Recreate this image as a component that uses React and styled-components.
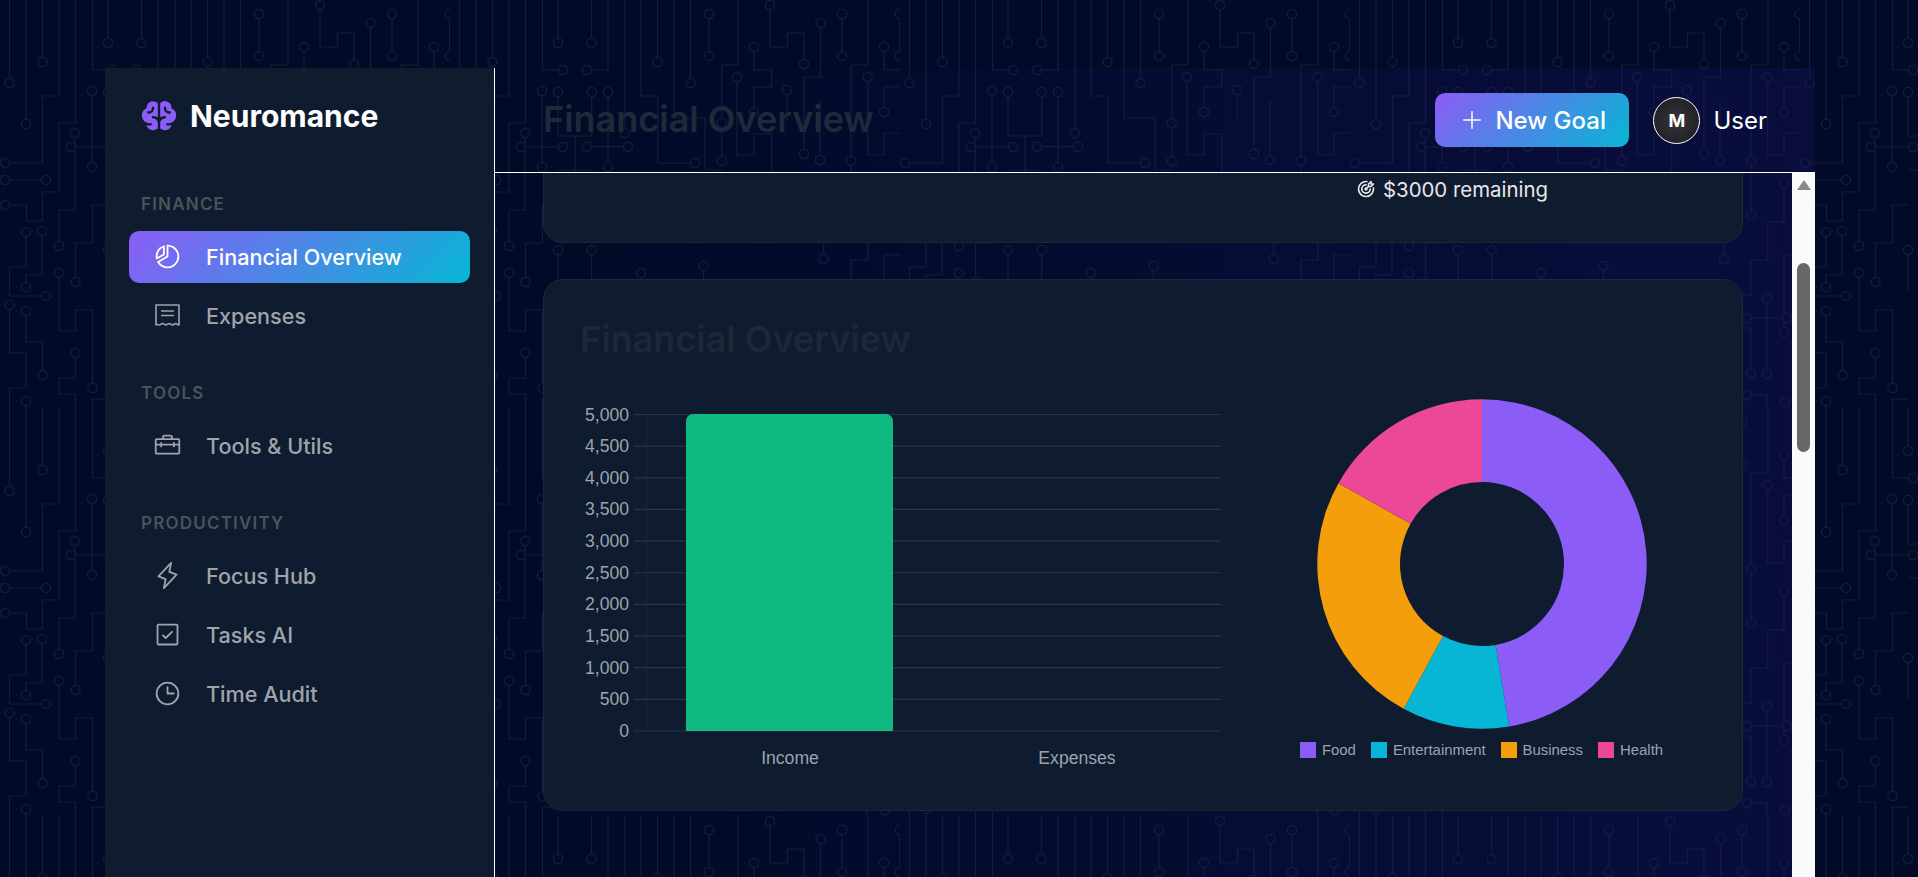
import React from "react";
import styled, { createGlobalStyle } from "styled-components";
import { PiBrainFill, PiChartPieSlice, PiLightning, PiCheckSquare, PiClock, PiPlus, PiToolbox } from "react-icons/pi";
import { TbTargetArrow } from "react-icons/tb";

// circuit board tile behind the page
const traces = [
  "9.5,0 9.5,83", "26,0 26,124", "42.5,0 42.5,62", "59,0 59,96 42.5,96 42.5,163 5,163",
  "75.5,0 75.5,123 59,123 59,192 42.5,192 42.5,221 26.5,221 26.5,205 5,205",
  "92.5,0 92.5,70 113,70", "92,91 92,167", "75,133 75,210 59,210 59,246", "71,147 113,147",
  "5,180 46,180", "108,205 92.5,205 92.5,243 75.5,243 75.5,282",
  "26,232 26,267 9.5,267 9.5,296 46,296", "42,231 42,275 26,275 26,287",
  "59,273 59,331 75.5,331 75.5,310 92.5,310 92.5,388",
  "9.5,305 9.5,353 26,353 26,388 9.5,388 9.5,408", "26,311 26,342 42.5,342 42.5,375",
  "75.5,353 75.5,378 59,378 59,394 75.5,394 75.5,408", "26,401 26,408", "108,399 92.5,399 92.5,408",
  "108,0 108,43", "141.5,0 141.5,43", "158,0 158,70 137,70", "175,0 175,133",
  "191,0 191,96 207.7,96 207.7,163 245,163", "207.5,0 207.5,62", "224,0 224,118 255,118 255,170 272,170",
  "240.5,0 240.5,83", "259,14 259,56", "288,0 288,65 271.7,65 271.7,161",
  "304,47 304,70 321.7,70 321.7,87 304,87 304,112", "287,77 287,155 304,155 304,134 321.7,134 321.7,200",
  "320,5 320,47 337.5,47 337.5,33 354,33 354,64", "337,90 337,122", "370.5,23 370.5,77 354,77 354,154",
  "370,100 370,160", "392,14 392,56", "418,0 418,65 401,65 401,215", "434,47 434,70 450,70",
  "434,112 434,87 450,87", "417.7,77 417.7,155 434,155 434,133 450,133",
  "108,92 108,136 141.7,136 141.7,92", "158,92 158,167", "125,136 125,172", "108,170 142,170",
  "137,146.7 178,146.7", "449.7,14 449.7,56",
  "108,250 108,290", "141.6,250 141.6,290", "191,273 191,300", "253.5,266 253.5,300", "373.7,259 373.7,230",
  "434,183 434,222 417.7,222 417.7,260 401,260 401,295 386,295", "450,255 434,255 434,332",
  "417,298 417,374", "397,318 437,318", "401,373 401,328 386,328", "397,395 417,395 417,408",
];
const pads = [
  [9.5, 83], [26, 124], [42.5, 62], [5, 163], [5, 205], [113, 70], [92, 91], [92, 167], [75, 133], [59, 246],
  [71, 147], [113, 147], [5, 180], [46, 180], [75.5, 282], [26, 232], [46, 296], [42, 231], [26, 287],
  [59, 273], [92.5, 388], [9.5, 305], [26, 311], [42.5, 375], [75.5, 353], [26, 401],
  [108, 43], [141.5, 43], [137, 70], [175, 133], [245, 163], [207.5, 62], [240.5, 83], [259, 14], [259, 56],
  [271.7, 123], [271.7, 161], [304, 47], [304, 112], [287, 77], [320, 5], [354, 64], [337, 90], [370.5, 23],
  [354, 154], [370, 160], [392, 14], [392, 56], [401, 161], [401, 215], [434, 47], [434, 112], [417.7, 77],
  [108, 92], [141.7, 92], [158, 92], [158, 167], [137, 146.7], [178, 146.7], [449.7, 14], [449.7, 56],
  [108, 250], [141.6, 250], [191, 273], [253.5, 266], [373.7, 259], [434, 183], [434, 332], [417, 298], [417, 374],
  [397, 318], [437, 318], [401, 373], [397, 395], [435, 402],
];
const tile = `<svg xmlns="http://www.w3.org/2000/svg" width="450" height="408"><g fill="none" stroke="#141d38" stroke-width="1.2">${traces
  .map((t) => `<polyline points="${t}"/>`)
  .join("")}</g><g fill="#010a26" stroke="#141d38" stroke-width="1.2">${pads
  .map(([x, y]) => `<circle cx="${x}" cy="${y}" r="4.6"/>`)
  .join("")}</g></svg>`;

const GlobalStyle = createGlobalStyle`
  * { box-sizing: border-box; }
  html, body { margin: 0; height: 100%; overflow: hidden; }
  body {
    background-color: #010a26;
    background-image: url("data:image/svg+xml,${encodeURIComponent(tile)}");
    background-size: 450px 408px;
    font-family: Inter, "Liberation Sans", sans-serif;
  }
`;

const Shell = styled.div`
  display: flex;
  height: 100vh;
  padding: 68px 103px 0 105px;
`;

const Sidebar = styled.aside`
  width: 389px;
  flex-shrink: 0;
  background: #0f1b2e;
  padding: 34px 24px 0;
`;

const Logo = styled.div`
  display: flex;
  align-items: center;
  gap: 12px;
  height: 28px;
  margin: 0 0 63.5px 11px;
  color: #fff;
  font-size: 30px;
  font-weight: 700;
  svg { color: #8b5cf6; width: 38px; height: 38px; }
`;

const Section = styled.div`
  margin-bottom: 41px;
`;

const SectionLabel = styled.div`
  height: 20px;
  line-height: 20px;
  margin: 0 0 17px 12px;
  color: #4d525b;
  font-size: 17px;
  font-weight: 600;
  letter-spacing: 1.2px;
`;

const NavList = styled.div`
  display: flex;
  flex-direction: column;
  gap: 7px;
`;

const NavItem = styled.div`
  display: flex;
  align-items: center;
  gap: 24px;
  height: 52px;
  padding: 0 24px;
  border-radius: 10px;
  font-size: 21.6px;
  font-weight: 500;
  color: ${(p) => (p.$active ? "#fff" : "#a0a3ab")};
  background: ${(p) => (p.$active ? "linear-gradient(135deg, #8b5cf6, #06b6d4)" : "transparent")};
`;

const NavIcon = styled.span`
  display: flex;
  justify-content: center;
  width: 29px;
  svg { width: 29px; height: 29px; }
`;

const Content = styled.div`
  flex: 1;
  min-width: 0;
  display: flex;
  flex-direction: column;
  border-left: 1px solid #fff;
  background: linear-gradient(90deg, rgba(20, 15, 90, 0) 0%, rgba(24, 18, 100, 0.36) 100%);
`;

const Header = styled.header`
  display: flex;
  align-items: center;
  height: 105px;
  padding: 0 48px;
  border-bottom: 1px solid #fff;
`;

const PageTitle = styled.h1`
  margin: 0 auto 2px 0;
  color: #1e2a3a;
  font-size: 36px;
  font-weight: 600;
`;

const NewGoal = styled.button`
  display: flex;
  align-items: center;
  gap: 11px;
  width: 194px;
  height: 54px;
  padding: 0 0 0 25px;
  border: none;
  border-radius: 10px;
  color: #fff;
  font: 500 24px Inter, sans-serif;
  background: linear-gradient(135deg, #8b5cf6, #06b6d4);
  svg { width: 24px; height: 24px; }
`;

const Avatar = styled.div`
  display: flex;
  align-items: center;
  justify-content: center;
  width: 47px;
  height: 47px;
  margin-left: 24px;
  border: 1px solid #fff;
  border-radius: 50%;
  background: radial-gradient(circle, #34343a, #1b1b20);
  color: #fff;
  font-size: 18px;
  font-weight: 700;
`;

const UserName = styled.span`
  margin-left: 13px;
  color: #fff;
  font-size: 24px;
`;

const Body = styled.div`
  flex: 1;
  min-height: 0;
  display: flex;
`;

const Cards = styled.main`
  flex: 1;
  min-width: 0;
  display: flex;
  flex-direction: column;
  gap: 36px;
  padding: 0 49px 0 48px;
`;

const GoalStub = styled.section`
  display: flex;
  justify-content: flex-end;
  height: 70px;
  padding: 3px 194px 0 0;
  background: #0f1b2e;
  border: 1px solid #1c2838;
  border-top: none;
  border-radius: 0 0 20px 20px;
`;

const Remaining = styled.div`
  display: flex;
  align-items: center;
  gap: 7px;
  height: 26px;
  color: #e5e7eb;
  font-size: 20.4px;
  svg { width: 20px; height: 20px; }
`;

const Card = styled.section`
  height: 532px;
  padding: 38.5px 37px 0;
  background: #0f1b2e;
  border: 1px solid #1c2838;
  border-radius: 20px;
`;

const CardTitle = styled.h2`
  margin: 0 0 0 -1px;
  color: #1c2838;
  font-size: 36px;
  font-weight: 600;
  line-height: 40px;
`;

const Charts = styled.div`
  display: flex;
  margin-top: 41.5px;
`;

const DonutColumn = styled.div`
  display: flex;
  flex-direction: column;
  align-items: center;
  width: 445px;
  margin: -1px 0 0 38px;
`;

const Legend = styled.div`
  display: flex;
  gap: 15px;
  margin-top: 13px;
`;

const LegendItem = styled.div`
  display: flex;
  align-items: center;
  gap: 6px;
  color: #9ca3af;
  font: 14.9px "Liberation Sans", sans-serif;
`;

const Swatch = styled.i`
  display: block;
  width: 16px;
  height: 16px;
  background: ${(p) => p.$color};
`;

const ScrollTrack = styled.div`
  display: flex;
  flex-direction: column;
  align-items: center;
  width: 23px;
  flex-shrink: 0;
  background: #fafafa;
`;

const ScrollArrow = styled.div`
  width: 0;
  height: 0;
  margin-top: 7px;
  border-left: 7.5px solid transparent;
  border-right: 7.5px solid transparent;
  border-bottom: 10px solid #8a8a8a;
`;

const ScrollThumb = styled.div`
  width: 13px;
  height: 189px;
  margin-top: 73px;
  border-radius: 7px;
  background: #686868;
`;

const ReceiptIcon = () => (
  <svg viewBox="0 0 29 29" fill="none" stroke="currentColor" strokeWidth="1.6" strokeLinejoin="round">
    <path d="M3 4h23v20c-1.3 0-1.9-1.5-3.3-1.5s-1.9 1.5-3.3 1.5-1.9-1.5-3.2-1.5-1.9 1.5-3.3 1.5-1.9-1.5-3.2-1.5S7.800 24 6.300 24 4.300 22.500 3 24z" />
    <path d="M8 10h13M8 14.500h13" />
  </svg>
);

const ticks = [5000, 4500, 4000, 3500, 3000, 2500, 2000, 1500, 1000, 500, 0];

const BarChart = () => (
  <svg width="640" height="372" viewBox="0 0 640 372" fontFamily="Liberation Sans, sans-serif">
    {ticks.map((t, i) => {
      const y = 14.5 + i * 31.65;
      return (
        <g key={t}>
          <line x1="53" x2="640" y1={y} y2={y} stroke="#2a3547" strokeWidth="1.2" />
          <text x="48" y={y + 6} textAnchor="end" fontSize="17.6" fill="#9ca3af">
            {t.toLocaleString("en-US")}
          </text>
        </g>
      );
    })}
    <line x1="65.5" x2="65.5" y1="14" y2="331" stroke="#1a2636" />
    <path d="M105 331V21a7 7 0 0 1 7-7h193a7 7 0 0 1 7 7v310z" fill="#10b981" />
    <text x="209" y="364" textAnchor="middle" fontSize="17.6" fill="#9ca3af">Income</text>
    <text x="496" y="364" textAnchor="middle" fontSize="17.6" fill="#9ca3af">Expenses</text>
  </svg>
);

const slices = [
  { label: "Food", value: 45, color: "#8b5cf6" },
  { label: "Entertainment", value: 10, color: "#06b6d4" },
  { label: "Business", value: 24, color: "#f59e0b" },
  { label: "Health", value: 16, color: "#ec4899" },
];

const arcPoint = (r, a) => [165 + r * Math.sin(a), 165 - r * Math.cos(a)];

const Donut = () => {
  const total = slices.reduce((s, x) => s + x.value, 0);
  let start = 0;
  return (
    <svg width="330" height="330" viewBox="0 0 330 330">
      {slices.map((s) => {
        const end = start + (s.value / total) * Math.PI * 2;
        const large = end - start > Math.PI ? 1 : 0;
        const [a, b] = arcPoint(164.7, start);
        const [c, d] = arcPoint(164.7, end);
        const [e, f] = arcPoint(82, end);
        const [g, h] = arcPoint(82, start);
        start = end;
        return (
          <path
            key={s.label}
            fill={s.color}
            d={`M${a} ${b}A164.7 164.7 0 ${large} 1 ${c} ${d}L${e} ${f}A82 82 0 ${large} 0 ${g} ${h}Z`}
          />
        );
      })}
    </svg>
  );
};

const sections = [
  { title: "FINANCE", items: [["Financial Overview", <PiChartPieSlice />, true], ["Expenses", <ReceiptIcon />]] },
  { title: "TOOLS", items: [["Tools & Utils", <PiToolbox />]] },
  { title: "PRODUCTIVITY", items: [["Focus Hub", <PiLightning />], ["Tasks AI", <PiCheckSquare />], ["Time Audit", <PiClock />]] },
];

export default function App() {
  return (
    <>
      <GlobalStyle />
      <Shell>
        <Sidebar>
          <Logo>
            <PiBrainFill />
            Neuromance
          </Logo>
          {sections.map((s) => (
            <Section key={s.title}>
              <SectionLabel>{s.title}</SectionLabel>
              <NavList>
                {s.items.map(([label, icon, active]) => (
                  <NavItem key={label} $active={active}>
                    <NavIcon>{icon}</NavIcon>
                    {label}
                  </NavItem>
                ))}
              </NavList>
            </Section>
          ))}
        </Sidebar>
        <Content>
          <Header>
            <PageTitle>Financial Overview</PageTitle>
            <NewGoal>
              <PiPlus />
              New Goal
            </NewGoal>
            <Avatar>M</Avatar>
            <UserName>User</UserName>
          </Header>
          <Body>
            <Cards>
              <GoalStub>
                <Remaining>
                  <TbTargetArrow />
                  $3000 remaining
                </Remaining>
              </GoalStub>
              <Card>
                <CardTitle>Financial Overview</CardTitle>
                <Charts>
                  <BarChart />
                  <DonutColumn>
                    <Donut />
                    <Legend>
                      {slices.map((s) => (
                        <LegendItem key={s.label}>
                          <Swatch $color={s.color} />
                          {s.label}
                        </LegendItem>
                      ))}
                    </Legend>
                  </DonutColumn>
                </Charts>
              </Card>
            </Cards>
            <ScrollTrack>
              <ScrollArrow />
              <ScrollThumb />
            </ScrollTrack>
          </Body>
        </Content>
      </Shell>
    </>
  );
}
